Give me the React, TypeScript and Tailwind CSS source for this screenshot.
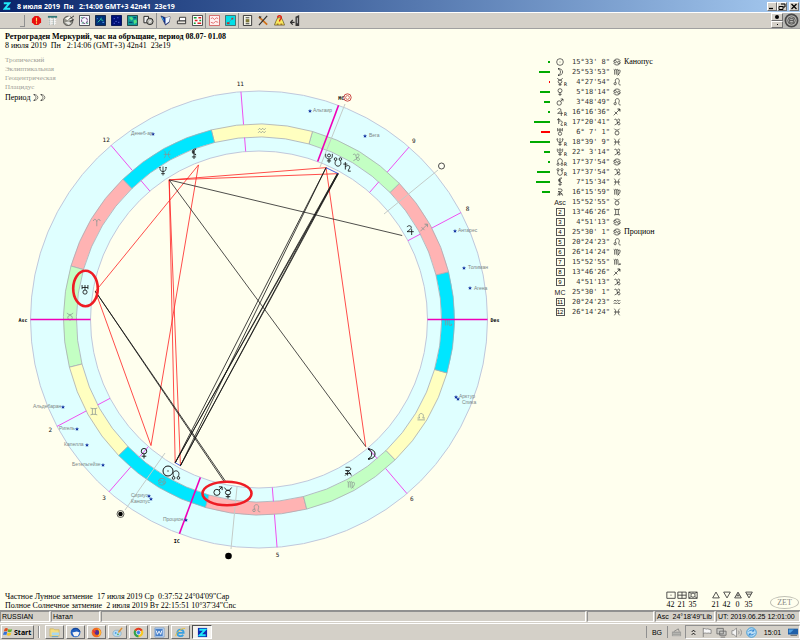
import React from "react";

type GlyphName =
  | "sun" | "moon" | "mercury" | "venus" | "mars" | "jupiter" | "saturn" | "uranus"
  | "neptune" | "pluto" | "northNode" | "southNode" | "lilith" | "proserpina"
  | "aries" | "taurus" | "gemini" | "cancer" | "leo" | "virgo" | "libra" | "scorpio"
  | "sagittarius" | "capricorn" | "aquarius" | "pisces";

// All glyphs are stroked on a 12x12 grid
const GLYPHS: Record<GlyphName, string> = {
  sun: "M1 6a5 5 0 1 0 10 0a5 5 0 1 0-10 0M5.4 6h1.200",
  moon: "M3 1c3.500 0 7 1.500 7 5s-3.500 5-7 5c5-2.500 5-7.500 0-10M3 1h2M3 11h2",
  mercury: "M2 0l2.500 3h3l2.500-3M3.200 5.500a2.800 2.500 0 1 0 5.600 0a2.800 2.500 0 1 0-5.600 0M6 8v4M3.500 10h5",
  venus: "M3 4a3 3 0 1 0 6 0a3 3 0 1 0-6 0M6 7v5M3.500 9.500h5",
  mars: "M1.500 7.500a3.300 3.300 0 1 0 6.600 0a3.300 3.300 0 1 0-6.600 0M7 5l3.500-3.500M7 1.500h3.500v3.500",
  jupiter: "M2.500 2.500c.5-2 5-2.500 5 .5c0 2-3 3.500-5 5h8M8 5v7",
  saturn: "M1.500 2.500h5M4 0v9M4 6c1-2 5-2.500 5.500 0c0 2-2.500 3-2 5h3",
  uranus: "M2.500 0v5M9.500 0v5M2.500 3h7M6 0v6M3.500 8.500a2.500 2.500 0 1 0 5 0a2.500 2.500 0 1 0-5 0",
  neptune: "M2 1v2c0 5 8 5 8 0v-2M6 0v12M3.500 9.500h5M1 2l1-1l1 1M9 2l1-1l1 1",
  pluto: "M2 1v2.500c0 5 8 5 8 0v-2.500M4.200 3a1.800 1.800 0 1 0 3.600 0a1.800 1.800 0 1 0-3.600 0M6 7v5M3.500 9.500h5",
  northNode: "M3.500 8c-2-3-1-7 2.500-7s4.500 4 2.500 7M1.500 9.500a1.600 1.600 0 1 0 3.200 0a1.600 1.600 0 1 0-3.200 0M7.300 9.500a1.600 1.600 0 1 0 3.200 0a1.600 1.600 0 1 0-3.200 0",
  southNode: "M3.500 4c-2 3-1 7 2.500 7s4.500-4 2.500-7M1.500 2.500a1.600 1.600 0 1 0 3.200 0a1.600 1.600 0 1 0-3.200 0M7.300 2.500a1.600 1.600 0 1 0 3.200 0a1.600 1.600 0 1 0-3.200 0",
  lilith: "M8.500 0c-6-.5-6 7 0 7c-3-1.500-3-5.500 0-7M5.500 1.500v4M4.800 2v3M6 7v5M3.500 9.500h5",
  proserpina: "M3 1.500h4c3 0 3 4 0 4h-4M3 5.500c4 0 6 3 7 6M2.500 9h7M5.500 6.500v5M2.500 11.500l3-3",
  aries: "M1.500 4c0-3 4-3 4.500 1v6M10.500 4c0-3-4-3-4.500 1",
  taurus: "M2 1c1 3 7 3 8 0M3 7.500a3 3 0 1 0 6 0a3 3 0 1 0-6 0",
  gemini: "M1.500 1.500c3 1 6 1 9 0M1.500 10.500c3-1 6-1 9 0M4 2v8M8 2v8",
  cancer: "M1 5c2-5 8-4 10-1M1.500 5.500a1.800 1.800 0 1 0 3.600 0a1.800 1.800 0 1 0-3.600 0M11 7c-2 5-8 4-10 1M6.900 6.500a1.800 1.800 0 1 0 3.600 0a1.800 1.800 0 1 0-3.600 0",
  leo: "M1.500 8.500a1.700 1.700 0 1 0 3.400 0a1.700 1.700 0 1 0-3.400 0M4.500 7c-4-7 5-8 5-3c0 2-3 6.500 2 6.500",
  virgo: "M1 2l1.500 1v7M2.500 3c1-1.500 2.500-1 2.500 0v7M5 3c1-1.500 2.500-1 2.500 0v6l2 2M7.500 4c2-2 4-1 3 2s-3 4-4.500 5",
  libra: "M1 10.500h10M1 8h3c-2-3-.5-6 2-6s4 3 2 6h3",
  scorpio: "M1 2l1.500 1v7M2.500 3c1-1.500 2.500-1 2.500 0v7M5 3c1-1.500 2.500-1 2.500 0v6c0 1.500 1.500 1.500 3.500 0M9.500 8l1.700.8l-1 1.700",
  sagittarius: "M1 11l9.500-9.500M6.500 1.500h4v4M8 1.500l2.500 2.500M2.500 5.500l4 4",
  // hooked like a "z" crossed by a tail
  capricorn: "M2 3c1-2 3-1.500 3.500 0s1 3 1 4M6.500 3.500c1-3 4-2 3.500 0c-1 2-3 5-7.500 7M6 7c3-1 5 0 4.500 2s-3 2-4-1",
  aquarius: "M1 5l2-2l2 2l2-2l2 2l2-2M1 9l2-2l2 2l2-2l2 2l2-2",
  pisces: "M2 1c3 3 3 7 0 10M10 1c-3 3-3 7 0 10M1.500 6h9",
};

interface GlyphProps {
  name: GlyphName;
  size: number;
  x?: number;
  y?: number;
  color?: string;
}

function Glyph({ name, size, x, y, color = "#222222" }: GlyphProps) {
  return (
    <svg
      width={size}
      height={size}
      x={x !== undefined ? x - size / 2 : undefined}
      y={y !== undefined ? y - size / 2 : undefined}
      viewBox="0 0 12 12"
      className="inline-block overflow-visible"
      fill="none"
      stroke={color}
      strokeWidth="1"
    >
      <path d={GLYPHS[name]} />
    </svg>
  );
}

const CX = 259;
const CY = 319.5;
const R_OUTER = 228.5;
const R_SIGN_OUTER = 195.5;
const R_SIGN_INNER = 182.5;
const R_INNER = 168.5;
const R_ASPECT = 166;
const ASC = 45.88;

// Ecliptic longitude to a point on the wheel, ascendant on the left
function polar(longitude: number, r: number): [number, number] {
  const a = ((180 + longitude - ASC) * Math.PI) / 180;
  return [CX + r * Math.cos(a), CY - r * Math.sin(a)];
}

const SIGNS: GlyphName[] = [
  "aries", "taurus", "gemini", "cancer", "leo", "virgo",
  "libra", "scorpio", "sagittarius", "capricorn", "aquarius", "pisces",
];
const ELEMENTS = ["#ffb3b3", "#c3ffc3", "#ffffc0", "#00e6ff"];

const CUSPS = [
  { lon: 73.77, label: "2" },
  { lon: 94.85, label: "3" },
  { lon: 140.41, label: "5" },
  { lon: 176.24, label: "6" },
  { lon: 253.77, label: "8" },
  { lon: 274.85, label: "9" },
  { lon: 320.41, label: "11" },
  { lon: 356.24, label: "12" },
];

const AXES = [
  { lon: 45.88, label: "Asc" },
  { lon: 115.5, label: "IC" },
  { lon: 225.88, label: "Des" },
  { lon: 295.5, label: "MC" },
];

const LON = {
  sun: 105.55,
  moon: 175.9,
  mercury: 124.46,
  venus: 95.3,
  mars: 123.81,
  jupiter: 256.27,
  saturn: 287.34,
  uranus: 36.12,
  neptune: 348.65,
  pluto: 292.05,
  northNode: 107.63,
  southNode: 287.63,
  lilith: 337.26,
};

type Body = keyof typeof LON;

const ASPECTS: [Body, Body, string][] = [
  ["neptune", "pluto", "#ff2020"],
  ["neptune", "saturn", "#ff2020"],
  ["neptune", "sun", "#ff2020"],
  ["neptune", "northNode", "#ff2020"],
  ["lilith", "venus", "#ff2020"],
  ["lilith", "uranus", "#ff2020"],
  ["uranus", "venus", "#ff2020"],
  ["pluto", "moon", "#ff2020"],
  ["neptune", "moon", "#222222"],
  ["neptune", "jupiter", "#222222"],
  ["uranus", "mars", "#111111"],
  ["uranus", "mercury", "#111111"],
  ["pluto", "sun", "#111111"],
  ["pluto", "northNode", "#111111"],
  ["saturn", "sun", "#111111"],
  ["saturn", "northNode", "#111111"],
  ["southNode", "sun", "#111111"],
  ["southNode", "northNode", "#111111"],
  ["pluto", "saturn", "#1030e0"],
  ["sun", "northNode", "#1030e0"],
];

const BODIES: { name: GlyphName; x: number; y: number; size: number }[] = [
  { name: "neptune", x: 163, y: 171, size: 9 },
  { name: "lilith", x: 194, y: 154, size: 10 },
  { name: "pluto", x: 329, y: 158, size: 10 },
  { name: "southNode", x: 338, y: 162, size: 10 },
  { name: "saturn", x: 347, y: 167, size: 10 },
  { name: "jupiter", x: 410, y: 230, size: 10 },
  { name: "uranus", x: 85, y: 290, size: 10 },
  { name: "venus", x: 144, y: 453, size: 11 },
  { name: "sun", x: 168, y: 471, size: 12 },
  { name: "northNode", x: 176, y: 475, size: 10 },
  { name: "mars", x: 218, y: 491, size: 11 },
  { name: "mercury", x: 228, y: 493, size: 11 },
  { name: "proserpina", x: 348, y: 471, size: 10 },
  { name: "moon", x: 371, y: 454, size: 12 },
];

// sx, sy is the star itself, tx, ty the start of its label
const STARS = [
  { name: "Денеб-ар", sx: 153, sy: 134, tx: 131, ty: 135 },
  { name: "Альтаир", sx: 310, sy: 111, tx: 313, ty: 112 },
  { name: "Вега", sx: 365, sy: 136, tx: 369, ty: 137 },
  { name: "Антарес", sx: 455, sy: 231, tx: 458, ty: 232 },
  { name: "Толиман", sx: 464, sy: 268, tx: 468, ty: 269 },
  { name: "Агена", sx: 470, sy: 288, tx: 474, ty: 290 },
  { name: "Арктур", sx: 456, sy: 397, tx: 459, ty: 398 },
  { name: "Спика", sx: 458, sy: 399, tx: 462, ty: 404 },
  { name: "Альдебаран", sx: 63, sy: 407, tx: 33, ty: 408 },
  { name: "Ригель", sx: 77, sy: 429, tx: 59, ty: 430 },
  { name: "Капелла", sx: 87, sy: 445, tx: 64, ty: 446 },
  { name: "Бетельгейзе", sx: 103, sy: 465, tx: 72, ty: 466 },
  { name: "Сириус", sx: 149, sy: 496, tx: 131, ty: 497 },
  { name: "Канопус", sx: 151, sy: 499, tx: 131, ty: 503 },
  { name: "Процион", sx: 186, sy: 520, tx: 163, ty: 521 },
];

function segment(lon: number, r1: number, r2: number) {
  const [x1, y1] = polar(lon, r1);
  const [x2, y2] = polar(lon, r2);
  return { x1, y1, x2, y2 };
}

function signPath(i: number) {
  const [ax, ay] = polar(i * 30, R_SIGN_OUTER);
  const [bx, by] = polar(i * 30 + 30, R_SIGN_OUTER);
  const [cx, cy] = polar(i * 30 + 30, R_SIGN_INNER);
  const [dx, dy] = polar(i * 30, R_SIGN_INNER);
  return `M${ax} ${ay}A${R_SIGN_OUTER} ${R_SIGN_OUTER} 0 0 0 ${bx} ${by}L${cx} ${cy}A${R_SIGN_INNER} ${R_SIGN_INNER} 0 0 1 ${dx} ${dy}Z`;
}

function Wheel() {
  return (
    <svg
      viewBox="0 29 500 540"
      className="col-start-1 row-start-1 w-full font-['DejaVu_Sans_Mono',monospace]"
      role="img"
      aria-label="Натал"
    >
      <circle cx={CX} cy={CY} r={R_OUTER} fill="#dfffff" stroke="#c0c8dc" />
      <circle cx={CX} cy={CY} r={R_INNER} fill="#ffffee" stroke="#c0c8dc" />
      {SIGNS.map((sign, i) => (
        <path key={sign} d={signPath(i)} fill={ELEMENTS[i % 4]} stroke="#a8acb4" strokeWidth=".8" />
      ))}
      {SIGNS.map((sign, i) => {
        const [x, y] = polar(i * 30 + 15, 189);
        return <Glyph key={sign} name={sign} size={9} x={x} y={y} color="#889490" />;
      })}

      {CUSPS.map(({ lon, label }) => {
        const [x, y] = polar(lon, 236);
        return (
          <g key={label} stroke="#f050f0">
            <line {...segment(lon, R_SIGN_OUTER, R_OUTER)} />
            <line {...segment(lon, R_INNER, R_SIGN_INNER)} />
            <text x={x} y={y + 2} textAnchor="middle" stroke="none" fill="#111111" className="text-[6px]">
              {label}
            </text>
          </g>
        );
      })}
      {AXES.map(({ lon, label }) => {
        const [x, y] = polar(lon, 236);
        return (
          <g key={label}>
            <line {...segment(lon, R_INNER, R_OUTER)} stroke="#f000b8" strokeWidth="1.600" />
            <text x={x} y={y + 2} textAnchor="middle" className="text-[5px] font-bold">
              {label}
            </text>
          </g>
        );
      })}

      <g stroke="#c4ccc8">
        <line x1="345" y1="104" x2="320" y2="167" />
        <line x1="438" y1="170" x2="384" y2="214" />
        <line x1="125" y1="510" x2="165" y2="453" />
        <line x1="231" y1="549" x2="237" y2="487" />
      </g>
      <g fill="none">
        <circle cx="347.500" cy="97.500" r="3.700" stroke="#c02020" strokeWidth=".8" />
        <circle cx="347.500" cy="97.500" r="1.900" stroke="#c02020" strokeWidth=".6" />
        <circle cx="441.500" cy="166" r="3" stroke="#222222" strokeWidth=".8" fill="#fffff4" />
        <circle cx="120.500" cy="514" r="3.500" stroke="#222222" strokeWidth=".7" />
        <circle cx="120.500" cy="514" r="2.300" fill="#000000" />
        <circle cx="228.500" cy="556" r="3.300" fill="#000000" />
      </g>

      {ASPECTS.map(([a, b, color]) => {
        const [x1, y1] = polar(LON[a], R_ASPECT);
        const [x2, y2] = polar(LON[b], R_ASPECT);
        return <line key={a + b} x1={x1} y1={y1} x2={x2} y2={y2} stroke={color} strokeWidth=".8" />;
      })}

      {BODIES.map((body) => (
        <Glyph key={body.name} {...body} color="#111111" />
      ))}

      {STARS.map(({ name, sx, sy, tx, ty }) => (
        <g key={name}>
          <path
            d={`M${sx} ${sy - 2}l.6 1.400h1.400l-1.100 1l.4 1.400l-1.300-.8l-1.300.8l.4-1.400l-1.100-1h1.400z`}
            fill="#1030a0"
          />
          <text x={tx} y={ty} fill="#7c8686" className="font-['Liberation_Sans',sans-serif] text-[5px]">
            {name}
          </text>
        </g>
      ))}

      <g fill="none" stroke="#ee1c24" strokeWidth="2.600">
        <ellipse cx="85.500" cy="288.500" rx="12.300" ry="17.800" />
        <ellipse cx="227" cy="493.500" rx="24.500" ry="11.800" />
      </g>
    </svg>
  );
}

interface Row {
  id: string;
  body?: GlyphName;
  retro?: boolean;
  bar?: number;
  weak?: boolean;
  value: string;
  sign: GlyphName;
  star?: string;
}

const ROWS: Row[] = [
  { id: "sun", body: "sun", bar: 2, value: "15°33' 8\"", sign: "cancer", star: "Канопус" },
  { id: "moon", body: "moon", bar: 11, value: "25°53'53\"", sign: "virgo" },
  { id: "mercury", body: "mercury", retro: true, bar: 1, weak: true, value: " 4°27'54\"", sign: "leo" },
  { id: "venus", body: "venus", bar: 10, value: " 5°18'14\"", sign: "cancer" },
  { id: "mars", body: "mars", bar: 6, value: " 3°48'49\"", sign: "leo" },
  { id: "jupiter", body: "jupiter", retro: true, bar: 2, value: "16°16'36\"", sign: "sagittarius" },
  { id: "saturn", body: "saturn", retro: true, bar: 16, value: "17°20'41\"", sign: "capricorn" },
  { id: "uranus", body: "uranus", bar: 9, weak: true, value: " 6° 7' 1\"", sign: "taurus" },
  { id: "neptune", body: "neptune", retro: true, bar: 20, value: "18°39' 9\"", sign: "pisces" },
  { id: "pluto", body: "pluto", retro: true, bar: 6, value: "22° 3'14\"", sign: "capricorn" },
  { id: "north", body: "northNode", retro: true, bar: 2, value: "17°37'54\"", sign: "cancer" },
  { id: "south", body: "southNode", retro: true, bar: 13, value: "17°37'54\"", sign: "capricorn" },
  { id: "lilith", body: "lilith", bar: 14, value: " 7°15'34\"", sign: "pisces" },
  { id: "proserpina", body: "proserpina", bar: 8, value: "16°15'59\"", sign: "virgo" },
  { id: "Asc", value: "15°52'55\"", sign: "taurus" },
  { id: "2", value: "13°46'26\"", sign: "gemini" },
  { id: "3", value: " 4°51'13\"", sign: "cancer" },
  { id: "4", value: "25°30' 1\"", sign: "cancer", star: "Процион" },
  { id: "5", value: "20°24'23\"", sign: "leo" },
  { id: "6", value: "26°14'24\"", sign: "virgo" },
  { id: "7", value: "15°52'55\"", sign: "scorpio" },
  { id: "8", value: "13°46'26\"", sign: "sagittarius" },
  { id: "9", value: " 4°51'13\"", sign: "capricorn" },
  { id: "MC", value: "25°30' 1\"", sign: "capricorn" },
  { id: "11", value: "20°24'23\"", sign: "aquarius" },
  { id: "12", value: "26°14'24\"", sign: "pisces" },
];

function Positions() {
  return (
    <table className="mt-7 ml-6 self-start justify-self-start border-collapse leading-none">
      <tbody>
        {ROWS.map((row) => (
          <tr key={row.id} className="h-[10px]">
            <td className="w-[26px] p-0 align-middle">
              {row.bar && (
                <div
                  className={`ml-auto h-[2px] ${row.weak ? "bg-[#ff0000]" : "bg-[#00aa00]"}`}
                  style={{ width: row.bar }}
                ></div>
              )}
            </td>
            <td className="w-5 p-0">
              <div className="flex h-[10px] items-center justify-center">
                {row.body ? (
                  <span className="relative flex">
                    <Glyph name={row.body} size={8} />
                    {row.retro && (
                      <span className="absolute top-1 left-2 font-['DejaVu_Sans_Mono',monospace] text-[5px] leading-none">
                        R
                      </span>
                    )}
                  </span>
                ) : /^\d/.test(row.id) ? (
                  <span className="flex h-2 w-[9px] items-center justify-center border border-[#555555] font-['Liberation_Sans',sans-serif] text-[6px] leading-none text-black">
                    {row.id}
                  </span>
                ) : (
                  <span className="font-['Liberation_Sans',sans-serif] text-[7px] text-[#222222]">{row.id}</span>
                )}
              </div>
            </td>
            <td className="w-10 p-0 text-right font-['DejaVu_Sans_Mono',monospace] text-[7px] whitespace-pre text-[#333333]">
              {row.value}
            </td>
            <td className="w-[13px] p-0">
              <div className="flex h-[10px] items-center justify-center">
                <Glyph name={row.sign} size={8} />
              </div>
            </td>
            <td className="p-0 pl-px text-[8px]">{row.star}</td>
          </tr>
        ))}
      </tbody>
    </table>
  );
}

// Toolbar drawings, 12x12 each
const TOOLS: { label: string; icon: React.ReactNode }[][] = [
  [
    {
      label: "Stop",
      icon: (
        <>
          <path d="M4 1h4l3 3v4l-3 3h-4l-3-3v-4z" fill="#e81010" />
          <path d="M6 3v4M6 8v1.500" stroke="#ffe060" strokeWidth="1.200" />
        </>
      ),
    },
    {
      label: "Table",
      icon: (
        <>
          <path d="M1 1h10v2h-10z" fill="#307878" />
          <path d="M2 5h8M2 7h8M2 9h8M4 3v8M8 3v8" stroke="#f8f8f8" />
          <path d="M3 4v7M7 4v7" stroke="#88a0a0" strokeWidth=".6" />
        </>
      ),
    },
    {
      label: "Globe",
      icon: (
        <>
          <circle cx="5.500" cy="6.500" r="5.200" fill="#909088" stroke="#303030" strokeWidth=".7" />
          <path d="M2 4l5-3l3 4l-4 1z" fill="#f8f8f0" />
          <path d="M2 8l4-1l3 2l-3 2z" fill="#e4e4e0" />
          <path d="M6 5l6-4M8 7l4-2" stroke="#303030" />
        </>
      ),
    },
    {
      label: "Natal",
      icon: (
        <>
          <path d="M.5.5h11v11h-11z" fill="#f8f8ff" stroke="#404048" />
          <circle cx="6" cy="6" r="3.200" fill="none" stroke="#805890" strokeWidth="1.200" strokeDasharray="3 1" />
          <path d="M2 3h2M8 9h2M3 9l2-1" stroke="#20a060" />
        </>
      ),
    },
    {
      label: "Sky",
      icon: (
        <>
          <path d="M.5.5h11v11h-11z" fill="#003078" stroke="#102040" />
          <path d="M3 8l3-3l3 1M6 5l1-2" stroke="#30d0a0" fill="none" />
          <path d="M8 8h2M2 4h1" stroke="#60a0ff" />
        </>
      ),
    },
    {
      label: "Stars",
      icon: (
        <>
          <path d="M.5.5h11v11h-11z" fill="#001078" stroke="#001050" />
          <path d="M3 4h1M7 3h1M5 7h1M8 8h1M3 9h1" stroke="#8090ff" />
        </>
      ),
    },
    {
      label: "Map",
      icon: (
        <>
          <path d="M.5.5h11v11h-11z" fill="#109898" stroke="#204040" />
          <path d="M2 3l3-1l2 2l-2 2zM7 6l3-1l1 3l-3 2z" fill="#50e080" />
          <path d="M2 8h4M7 3h3" stroke="#003060" />
        </>
      ),
    },
    {
      label: "Coins",
      icon: (
        <>
          <path d="M1 1.500h5v7h-5z" fill="#f0f0f0" stroke="#202020" />
          <circle cx="7.500" cy="7" r="3.500" fill="#b0b0a8" stroke="#202020" />
          <path d="M6 6l3 2M9 5.500l-2 3" stroke="#f0f0f0" />
        </>
      ),
    },
  ],
  [
    {
      label: "Open",
      icon: (
        <>
          <path d="M1 1l5 2l5-1l-1 6l-4 3z" fill="#103090" stroke="#101040" strokeWidth=".6" />
          <path d="M6 3l5-1l-1 5l-4 3z" fill="#f0f8ff" />
          <path d="M2 2l2 4" stroke="#40c0ff" />
        </>
      ),
    },
    {
      label: "Print",
      icon: (
        <>
          <path d="M4 2.500h6.500v4h-7z" fill="#ffffff" stroke="#303030" />
          <path d="M1.500 6.500h9v3h-9z" fill="#e8e4dc" stroke="#303030" />
        </>
      ),
    },
    {
      label: "Aspects",
      icon: (
        <>
          <path d="M.5.5h11v11h-11z" fill="#ffffff" stroke="#404040" />
          <path d="M2 3h3M2 9h2M8 6h2" stroke="#10a030" strokeWidth="1.600" />
          <path d="M7 3h3M3 6h3M6 9h4" stroke="#e02020" strokeWidth="1.600" />
        </>
      ),
    },
  ],
  [
    {
      label: "Grid",
      icon: (
        <>
          <path d="M.5.5h11v11h-11z" fill="#fff0f0" stroke="#d06060" />
          <path d="M2 4l2-1l2 2l2-2l2 1M2 8l3 1l2-2l3 1" fill="none" stroke="#e06868" />
        </>
      ),
    },
    {
      label: "Graph",
      icon: (
        <>
          <path d="M.5.5h11v11h-11z" fill="#00e0e8" stroke="#406868" />
          <path d="M3 9l6-6" stroke="#5080a0" strokeWidth=".6" />
          <path d="M2 8h3v2h-3zM7 3h2v2h-2z" fill="#c03030" />
        </>
      ),
    },
  ],
  [
    {
      label: "Text",
      icon: (
        <>
          <path d="M1.500.5h9v11h-9z" fill="#f4f4e8" stroke="#303030" />
          <path d="M4 3h4M4 9.500h4" stroke="#303030" />
          <path d="M4 4.500h4v3.500h-4z" fill="#807838" />
        </>
      ),
    },
    {
      label: "Tools",
      icon: (
        <>
          <path d="M1 2l9 8.500" stroke="#d07018" strokeWidth="1.800" />
          <path d="M10 1l-9 10" stroke="#303030" strokeWidth="1.300" />
          <path d="M1 1l3 1l-2 2z" fill="#303030" />
        </>
      ),
    },
    {
      label: "Help",
      icon: (
        <>
          <path d="M2 7l2-4l4 0l2 4l1.500 4h-11z" fill="#f8e860" stroke="#504010" strokeWidth=".7" />
          <path d="M4 3c0-3 4-3 4 0c0 2-2 1.500-2 4" fill="none" stroke="#e02010" strokeWidth="1.500" />
          <path d="M3 10h2M7 10h2" stroke="#804010" />
        </>
      ),
    },
    {
      label: "Exit",
      icon: (
        <>
          <path d="M6 2l4-2v12h-4z" fill="#383838" />
          <path d="M0 8h5M3 5.500l-2.500 2.500l2.500 2.500" fill="none" stroke="#303030" strokeWidth="1.400" />
          <path d="M8 3v6" stroke="#d0d0d0" />
        </>
      ),
    },
  ],
];

const RAISED = "border border-t-white border-l-white border-r-[#707070] border-b-[#707070] bg-[#d4d0c8]";

function TitleBar() {
  return (
    <header className="flex h-3 items-center bg-linear-to-r from-[#0a246a] to-[#a6caf0] pr-px pl-[3px] text-white">
      <svg viewBox="0 0 10 10" className="h-[10px] w-2" fill="none">
        <path d="M1 1.500h7l-6 7h7" stroke="#20e8f8" strokeWidth="2.400" />
      </svg>
      <h1 className="ml-[6px] flex-1 font-['Noto_Sans',sans-serif] text-[7px] leading-none font-bold whitespace-pre">
        8 июля 2019  Пн   2:14:06 GMT+3 42n41  23e19
      </h1>
      <button aria-label="Minimize" className={`flex h-[9px] w-[10px] items-center justify-center ${RAISED}`}>
        <svg viewBox="0 0 8 7" className="h-[7px] w-2">
          <path d="M1 5.500h4" stroke="#000" strokeWidth="1.300" />
        </svg>
      </button>
      <button aria-label="Restore" className={`flex h-[9px] w-[10px] items-center justify-center ${RAISED}`}>
        <svg viewBox="0 0 8 7" className="h-[7px] w-2" fill="none" stroke="#000">
          <path d="M3 1h4v3h-2M1 3.500h4v3h-4z" />
        </svg>
      </button>
      <button aria-label="Close" className={`ml-[2px] flex h-[9px] w-[10px] items-center justify-center ${RAISED}`}>
        <svg viewBox="0 0 8 7" className="h-[7px] w-2" stroke="#000" strokeWidth="1.200">
          <path d="M1.500 1l5 5M6.500 1l-5 5" />
        </svg>
      </button>
    </header>
  );
}

function Toolbar() {
  return (
    <div className="flex h-[17px] items-center border-t border-b border-t-white border-b-[#a0a0a0] bg-[#d4d0c8]">
      <div className="ml-5 h-3 w-[5px] border-r border-b border-[#909090]"></div>
      <div className="ml-[3px] flex">
        {TOOLS.map((group, i) => (
          <div key={i} className={`flex ${i > 0 ? "border-l border-[#909090]" : ""}`}>
            {group.map(({ label, icon }) => (
              <button key={label} aria-label={label} className="flex h-[15px] w-4 items-center justify-center">
                <svg viewBox="0 0 12 12" className="h-[11px] w-[11px]">
                  {icon}
                </svg>
              </button>
            ))}
          </div>
        ))}
      </div>
      <div className="ml-auto flex flex-col">
        <button aria-label="Large point" className={`flex h-2 w-3 items-center justify-center ${RAISED}`}>
          <span className="h-1 w-1 rounded-full bg-black"></span>
        </button>
        <button aria-label="Small point" className={`flex h-[7px] w-3 items-center justify-center ${RAISED}`}>
          <span className="h-px w-px bg-black"></span>
        </button>
      </div>
      <button aria-label="Sphere" className="flex h-[15px] w-[17px] items-center justify-center bg-[#b8b8b4]">
        <svg viewBox="0 0 16 16" className="h-[15px] w-[15px]" fill="none">
          <circle cx="8" cy="8" r="6.500" fill="#b8b8b4" stroke="#484848" strokeWidth="1.800" />
          <ellipse cx="8" cy="8" rx="4" ry="4" stroke="#404040" strokeWidth=".8" />
          <path d="M6 6h4v4.500h-4zM6 8h4" stroke="#404040" strokeWidth=".8" />
        </svg>
      </button>
    </div>
  );
}

const COUNTS = [
  { value: 42, d: "M1 2.500h10v7.500h-10zM5.400 6.200h1.200" },
  { value: 21, d: "M1 2.500h10v7.500h-10zM6 2.500v7.500M1 6.200h10" },
  { value: 35, d: "M1 2.500h10v7.500h-10zM1 2.500l2.500 1.500M11 2.500l-2.500 1.500M1 10l2.500-2M11 10l-2.500-2M3.500 6.200a2.500 2.500 0 1 0 5 0a2.500 2.500 0 1 0-5 0" },
  { value: 21, d: "M6 2.500l4 7h-8z" },
  { value: 42, d: "M6 9.500l4-7h-8z" },
  { value: 0, d: "M6 2.500l4 7h-8zM4 7h4M6 4v3" },
  { value: 35, d: "M6 9.500l4-7h-8zM3.500 5h5" },
];

function Summary() {
  return (
    <footer className="flex items-end justify-between pr-px pl-[5px]">
      <div className="text-[8px] leading-[9px] whitespace-pre">
        <p>Частное Лунное затмение  17 июля 2019 Ср  0:37:52 24°04'09"Cap</p>
        <p>Полное Солнечное затмение  2 июля 2019 Вт 22:15:51 10°37'34"Cnc</p>
      </div>
      <div className="flex items-end">
        {COUNTS.map(({ value, d }, i) => (
          <div key={i} className={`w-[11px] ${i === 3 ? "ml-3" : ""}`}>
            <svg viewBox="0 0 12 12" className="mx-auto h-[10px] w-[10px]" fill="none" stroke="#333333">
              <path d={d} />
            </svg>
            <p className="text-center text-[8px] leading-[10px] whitespace-nowrap">{value}</p>
          </div>
        ))}
        <div className="mb-px ml-4 flex h-[13px] w-[29px] items-center justify-center rounded-[50%] border border-[#c0c0b4] text-[8px] leading-none text-[#888880]">
          ZET
        </div>
      </div>
    </footer>
  );
}

const PANEL = "flex items-center border border-t-[#909090] border-l-[#909090] border-r-white border-b-white px-px whitespace-pre";

function StatusBar() {
  return (
    <div className="flex h-[13px] gap-px border-t border-[#909090] bg-[#d4d0c8] pb-px font-['Liberation_Sans',sans-serif] text-[7px] leading-none">
      <div className={`w-[50px] ${PANEL}`}>RUSSIAN</div>
      <div className={`w-[49px] ${PANEL}`}>Натал</div>
      <div className={`flex-1 ${PANEL}`}></div>
      <div className={`w-[67px] ${PANEL}`}></div>
      <div className={`w-[60px] ${PANEL}`}>Asc  24°18'49"Lib</div>
      <div className={`w-[84px] ${PANEL}`}>UT: 2019.06.25 12:01:00</div>
    </div>
  );
}

const APPS: { label: string; icon: React.ReactNode }[] = [
  {
    label: "Explorer",
    icon: (
      <>
        <path d="M1 2h4l1 1h5v7h-10z" fill="#f4dc80" stroke="#c8a848" strokeWidth=".6" />
        <path d="M3 6h8v3h-8z" fill="#a8d8f0" />
        <path d="M3 10.500h7" stroke="#58a0d0" />
      </>
    ),
  },
  {
    label: "Thunderbird",
    icon: (
      <>
        <circle cx="6" cy="6" r="5.300" fill="#2060c0" />
        <path d="M2.500 6l5-1l3 1l-2 4l-4 0z" fill="#f4f4f4" />
        <path d="M3 3c2-2 6-2 8 2" stroke="#103880" fill="none" />
      </>
    ),
  },
  {
    label: "Firefox",
    icon: (
      <>
        <circle cx="6" cy="6" r="5.300" fill="#f06820" />
        <circle cx="6.500" cy="6" r="2.600" fill="#503090" />
        <path d="M7 .8c3 2 4.500 4 3.500 7c-1 2-2 2-3 2c2-2 2-5-.5-9z" fill="#ffc830" />
        <path d="M1.500 3c1 1 3 1 4 2l-2 2z" fill="#e02848" />
      </>
    ),
  },
  {
    label: "Paint",
    icon: (
      <>
        <ellipse cx="5.500" cy="7" rx="4.500" ry="3.500" fill="#b8dcf4" stroke="#80a8c0" strokeWidth=".7" />
        <circle cx="4" cy="6.500" r="1" fill="#50a0e0" />
        <circle cx="6.500" cy="8" r="1" fill="#50b060" />
        <path d="M11 1l-4 5" stroke="#e09030" strokeWidth="1.600" />
      </>
    ),
  },
  {
    label: "Chrome",
    icon: (
      <>
        <circle cx="6" cy="6" r="5.200" fill="#f8c820" />
        <path d="M6 6l-4.500-2.600a5.200 5.200 0 0 1 9 0z" fill="#e03828" />
        <path d="M6 6l0 5.200a5.200 5.200 0 0 1-4.500-7.800z" fill="#30a050" />
        <circle cx="6" cy="6" r="2.400" fill="#4080e8" stroke="#ffffff" strokeWidth=".8" />
      </>
    ),
  },
  {
    label: "Word",
    icon: (
      <>
        <path d="M1 1h10v10h-10z" fill="#d8e8fc" stroke="#7098c8" strokeWidth=".8" />
        <path d="M1.500 2h8v8h-8z" fill="#4880c8" />
        <path d="M2.500 4l1.200 4l1.800-3.500l1.800 3.500l1.200-4" fill="none" stroke="#ffffff" />
      </>
    ),
  },
  {
    label: "Internet Explorer",
    icon: (
      <>
        <path d="M2.500 6.500h7c0-5-7-5-7 0c0 4 5 4.500 6.500 2" fill="none" stroke="#38a0e0" strokeWidth="1.900" />
        <path d="M1 10c-1-3 6-9 10-8.500" fill="none" stroke="#f0c030" />
      </>
    ),
  },
];

function TaskBar() {
  return (
    <nav className="flex h-[17px] items-center border-t border-white bg-[#d4d0c8] pl-px font-['Liberation_Sans',sans-serif] text-[7px] leading-none">
      <button className={`flex h-[14px] w-[33px] items-center gap-px pl-px ${RAISED}`}>
        <svg viewBox="0 0 12 12" className="h-[10px] w-[10px]">
          <path d="M2 2c1.500-1 2.500-.8 4 0l-1 3.500c-1-.6-2.500-.6-4 0z" fill="#e05020" />
          <path d="M6.500 2.300c1.500.8 3 .8 4.500 0l-1 3.500c-1.500.8-3 .8-4.500 0z" fill="#60b030" />
          <path d="M1 6.200c1.500-.8 2.500-.6 4 0l-1 3.500c-1.500-.6-2.500-.6-4 0z" fill="#3070d8" />
          <path d="M5.500 6.500c1.500.8 3 .8 4.500 0l-1 3.500c-1.500.8-3 .8-4.500 0z" fill="#f8c820" />
        </svg>
        <span className="font-['Noto_Sans',sans-serif] font-bold">Start</span>
      </button>
      <div className="ml-1 h-3 w-[2px] border-r border-l border-r-white border-l-[#909090]"></div>
      <div className="ml-[5px] flex gap-[2px]">
        {APPS.map(({ label, icon }) => (
          <button key={label} aria-label={label} className={`flex h-[14px] w-[19px] items-center justify-center ${RAISED}`}>
            <svg viewBox="0 0 12 12" className="h-[11px] w-[11px]">
              {icon}
            </svg>
          </button>
        ))}
        <button
          aria-label="ZET"
          className="flex h-[14px] w-5 items-center justify-center border border-t-[#505050] border-r-white border-b-white border-l-[#505050] bg-[#f4f2ee]"
        >
          <svg viewBox="0 0 12 12" className="h-[11px] w-[11px]">
            <path d="M1 1h10v10h-10z" fill="#1028b0" />
            <path d="M2.500 3h6.500l-6 6h6.500" fill="none" stroke="#20e8f8" strokeWidth="2" />
          </svg>
        </button>
      </div>

      <div className="ml-auto flex h-[14px] items-center">
        <div className="h-3 w-px bg-[#909090]"></div>
        <button className="w-5 text-center">BG</button>
        <div className="h-3 w-px bg-[#909090]"></div>
        <svg viewBox="0 0 12 12" className="mx-[3px] h-[11px] w-[11px]">
          <path d="M1 5h10v5h-10z" fill="#a0a09c" />
          <path d="M3 5l5-3l1 3" fill="none" stroke="#888884" />
          <path d="M2 7h8M2 9h8" stroke="#c8c8c4" strokeWidth=".6" />
        </svg>
        <div className="flex h-[14px] items-center border border-t-[#909090] border-r-white border-b-white border-l-[#909090] pr-px pl-1">
          <svg viewBox="0 0 12 12" className="h-[9px] w-[7px]" fill="none" stroke="#000" strokeWidth="1.600">
            <path d="M3 5l3-3l3 3M3 10l3-3l3 3" />
          </svg>
          <svg viewBox="0 0 12 12" className="ml-1 h-[11px] w-[11px]" fill="#f8f8f8" stroke="#707070" strokeWidth=".8">
            <path d="M2.500 1v10M2.500 2c2-1 3 1 4.500 0l4 1v4c-2 0-3-1-4.500 0c-1-.6-2.500-.6-4 0" />
          </svg>
          <svg viewBox="0 0 12 12" className="ml-1 h-[11px] w-[11px]" fill="#c8c8c4" stroke="#686868" strokeWidth=".9">
            <path d="M1 1.500h7v6h-7zM4 4.500h7v4.500h-7zM5 11h5" />
          </svg>
          <svg viewBox="0 0 12 12" className="ml-1 h-[11px] w-[11px]" fill="#f4f4f4" stroke="#808080" strokeWidth=".8">
            <path d="M1 4h2l3-3v10l-3-3h-2z" />
            <path d="M8 4c1 1 1 3 0 4M10 2.500c2 2 2 5 0 7" fill="none" />
          </svg>
          <svg viewBox="0 0 12 12" className="ml-1 h-[11px] w-[11px]">
            <circle cx="6" cy="6" r="5.200" fill="#b8dcf4" stroke="#3898d8" />
            <path d="M3 5c1-2 4-2 5.500-1M9 7c-1 2-4 2-5.500 1M8.500 2.500v2h-2M3.500 9.500v-2h2" fill="none" stroke="#2880d0" />
          </svg>
          <time className="w-[31px] text-center">15:01</time>
          <svg viewBox="0 0 12 12" className="h-[10px] w-[10px]">
            <path d="M0 2h12v7h-12z" fill="#2060a8" />
            <path d="M1 3h6l-4 4h-2z" fill="#50a0e0" />
            <path d="M3 10h8" stroke="#505050" />
          </svg>
        </div>
      </div>
    </nav>
  );
}

export default function App() {
  return (
    <div className="flex min-h-screen flex-col bg-[#ffffee] font-['Liberation_Serif',serif] text-black">
      <TitleBar />
      <Toolbar />
      <main className="flex flex-1 flex-col justify-between">
        <div className="grid grid-cols-[5fr_3fr]">
          <section className="z-10 col-start-1 row-start-1 self-start pt-[3px] pl-[5px] text-[8px] leading-[9px] whitespace-pre">
            <h2 className="font-bold">Ретрограден Меркурий, час на обръщане, период 08.07- 01.08</h2>
            <p>8 июля 2019  Пн   2:14:06 (GMT+3) 42n41  23e19</p>
            <ul className="mt-[6px] text-[7px] text-[#a0a098]">
              <li>Тропический</li>
              <li>Эклиптикальная</li>
              <li>Геоцентрическая</li>
              <li>Плацидус</li>
            </ul>
            <p className="mt-px flex items-center">
              Период <Glyph name="moon" size={7} />
              <Glyph name="moon" size={7} />
            </p>
          </section>
          <Wheel />
          <Positions />
        </div>
        <Summary />
      </main>
      <StatusBar />
      <TaskBar />
    </div>
  );
}
